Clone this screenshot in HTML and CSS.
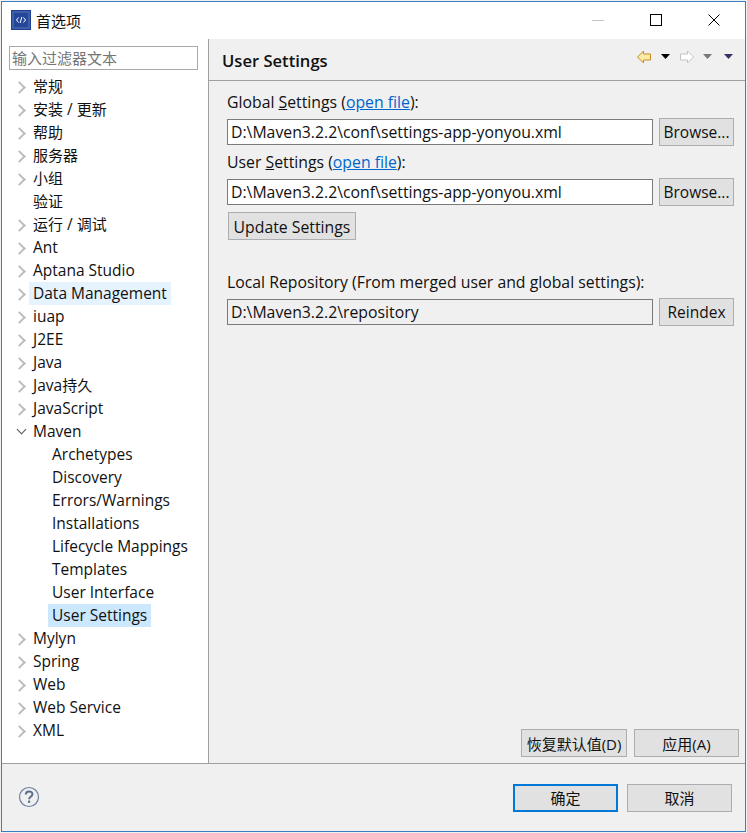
FILE: index.html
```html
<!DOCTYPE html>
<html lang="zh-CN">
  <head>
    <meta charset="UTF-8" />
    <title>首选项</title>
    <link rel="stylesheet" href="styles.css">
  </head>
  <body>
    <div class="window">
      <div class="titlebar">
        <svg class="app-icon" width="20" height="20" viewBox="0 0 20 20">
          <rect x="0.5" y="0.5" width="19" height="19" fill="#3f5fa8" stroke="#1f3f8f" />
          <rect x="3" y="3" width="14" height="14" fill="#24479c" />
          <path d="M7.5 7.5 5.5 10l2 2.5M12.5 7.5l2 2.5-2 2.5" fill="none" stroke="#fff" stroke-width="1" />
          <path d="M10.8 7 9.2 13" fill="none" stroke="#fff" stroke-width="1" />
        </svg>
        <span class="title">首选项</span>
        <div class="win-btns">
          <svg width="14" height="14" viewBox="0 0 14 14"><path d="M1 7.5h12" stroke="#c4c4c4" /></svg>
          <svg width="14" height="14" viewBox="0 0 14 14"><rect x="1.5" y="1.5" width="11" height="11" fill="none" stroke="#000" /></svg>
          <svg width="14" height="14" viewBox="0 0 14 14"><path d="M1.5 1.5l11 11M12.5 1.5l-11 11" stroke="#000" /></svg>
        </div>
      </div>

      <div class="main">
        <div class="sidebar">
          <input class="filter" type="text" placeholder="输入过滤器文本" />
          <ul class="tree">
            <li class="closed"><span class="cjk">常规</span></li>
            <li class="closed"><span class="cjk">安装</span> / <span class="cjk">更新</span></li>
            <li class="closed"><span class="cjk">帮助</span></li>
            <li class="closed"><span class="cjk">服务器</span></li>
            <li class="closed"><span class="cjk">小组</span></li>
            <li><span class="cjk">验证</span></li>
            <li class="closed"><span class="cjk">运行</span> / <span class="cjk">调试</span></li>
            <li class="closed">Ant</li>
            <li class="closed">Aptana Studio</li>
            <li class="closed"><span class="hover">Data Management</span></li>
            <li class="closed">iuap</li>
            <li class="closed">J2EE</li>
            <li class="closed">Java</li>
            <li class="closed">Java<span class="cjk">持久</span></li>
            <li class="closed">JavaScript</li>
            <li class="open">Maven</li>
            <li class="child">Archetypes</li>
            <li class="child">Discovery</li>
            <li class="child">Errors/Warnings</li>
            <li class="child">Installations</li>
            <li class="child">Lifecycle Mappings</li>
            <li class="child">Templates</li>
            <li class="child">User Interface</li>
            <li class="child"><span class="selected">User Settings</span></li>
            <li class="closed">Mylyn</li>
            <li class="closed">Spring</li>
            <li class="closed">Web</li>
            <li class="closed">Web Service</li>
            <li class="closed">XML</li>
          </ul>
        </div>

        <div class="content">
          <div class="page-head">
            <h1>User Settings</h1>
            <div class="nav-icons">
              <svg width="16" height="14" viewBox="0 0 16 14"><path d="M7.5 1 1.5 7l6 6v-3h7V4h-7z" fill="#fde9a8" stroke="#c98a1b" /></svg>
              <svg class="caret" width="9" height="5" viewBox="0 0 9 5"><path d="M0 0h9L4.5 5z" fill="#000" /></svg>
              <svg class="nav-next" width="16" height="14" viewBox="0 0 16 14"><path d="M8.5 1l6 6-6 6v-3h-7V4h7z" fill="#fff" stroke="#c4c4c4" /></svg>
              <svg class="caret" width="9" height="5" viewBox="0 0 9 5"><path d="M0 0h9L4.5 5z" fill="#777" /></svg>
              <svg class="caret" width="9" height="5" viewBox="0 0 9 5"><path d="M0 0h9L4.5 5z" fill="#3f2f66" /></svg>
            </div>
          </div>

          <div class="form">
            <div class="label">Global <u>S</u>ettings (<a href="#">open file</a>):</div>
            <div class="field-row">
              <input class="field" type="text" value="D:\Maven3.2.2\conf\settings-app-yonyou.xml" />
              <button class="btn browse">Browse...</button>
            </div>
            <div class="label">User <u>S</u>ettings (<a href="#">open file</a>):</div>
            <div class="field-row">
              <input class="field" type="text" value="D:\Maven3.2.2\conf\settings-app-yonyou.xml" />
              <button class="btn browse">Browse...</button>
            </div>
            <button class="btn update">Update Settings</button>
            <div class="label local">Local Repository (From merged user and global settings):</div>
            <div class="field-row">
              <input class="field readonly" type="text" value="D:\Maven3.2.2\repository" readonly />
              <button class="btn browse">Reindex</button>
            </div>
          </div>

          <div class="page-btns">
            <button class="btn wide restore cjk">恢复默认值(D)</button>
            <button class="btn wide cjk">应用(A)</button>
          </div>
        </div>
      </div>

      <div class="footer">
        <svg class="help" width="22" height="22" viewBox="0 0 22 22">
          <circle cx="11" cy="11" r="9.5" fill="none" stroke="#6d7fa3" stroke-width="1.2" />
          <path d="M7.8 8.6c0-4.2 6.6-4.2 6.6-.4 0 2.6-3.3 2.4-3.3 5" fill="none" stroke="#5b6b8c" stroke-width="2" />
          <rect x="10" y="14.6" width="2.2" height="2.2" fill="#5b6b8c" />
        </svg>
        <div class="footer-btns">
          <button class="btn wide default cjk">确定</button>
          <button class="btn wide cjk">取消</button>
        </div>
      </div>
    </div>
  </body>
</html>
```

FILE: styles.css
```css
* {
  margin: 0;
  padding: 0;
  box-sizing: border-box;
}

html, body {
  height: 100%;
  background: #f0f0f0;
  overflow: hidden;
}

body {
  font-family: "Open Sans", "Noto Sans CJK SC", sans-serif;
  font-size: 15.8px;
  color: #111;
}

.cjk {
  font-size: 15px;
}

.window {
  width: 745px;
  height: 831px;
  margin: 1px 0 0 1px;
  border: 1px solid #3c7fc0;
  display: flex;
  flex-direction: column;
  background: #f0f0f0;
}

.titlebar {
  height: 37px;
  flex: none;
  display: flex;
  align-items: center;
  background: #fff;
  padding: 0 0 1px 9px;
}

.title {
  margin-left: 5px;
  font-size: 15px;
}

.win-btns {
  margin-left: auto;
  display: flex;
  gap: 44px;
  padding-right: 24px;
}

.main {
  flex: 1;
  display: flex;
  min-height: 0;
}

.sidebar {
  width: 207px;
  flex: none;
  background: #fff;
  border-right: 1px solid #a0a0a0;
  padding: 7px 0 0 7px;
}

.filter {
  display: block;
  width: 189px;
  height: 24px;
  border: 1px solid #a9a9a9;
  padding-left: 2px;
  font-family: inherit;
  font-size: 15px;
  color: #111;
}

.filter::placeholder {
  color: #757575;
}

.tree {
  list-style: none;
  margin: 5px 0 0 -7px;
  font-size: 15.5px;
}

.tree li {
  height: 23px;
  line-height: 23px;
  padding-left: 31px;
  white-space: nowrap;
  position: relative;
}

.tree li.child {
  padding-left: 50px;
}

.tree li.closed::before {
  content: "";
  position: absolute;
  left: 13px;
  top: 8px;
  width: 7px;
  height: 7px;
  border-top: 2px solid #bdbdbd;
  border-right: 2px solid #bdbdbd;
  transform: rotate(45deg);
}

.tree li.open::before {
  content: "";
  position: absolute;
  left: 16px;
  top: 6px;
  width: 6px;
  height: 6px;
  border-bottom: 1px solid #555;
  border-right: 1px solid #555;
  transform: rotate(45deg);
}

.hover, .selected {
  display: inline-block;
  height: 23px;
  padding: 0 4px;
  margin-left: -4px;
}

.hover {
  background: #e5f3ff;
}

.selected {
  background: #cce8ff;
}

.content {
  flex: 1;
  display: flex;
  flex-direction: column;
  min-width: 0;
}

.page-head {
  height: 42px;
  flex: none;
  display: flex;
  align-items: center;
  justify-content: space-between;
  padding: 0 12px 0 13px;
  border-bottom: 1px solid #a0a0a0;
}

.page-head h1 {
  font-size: 16.6px;
  font-weight: 600;
  margin-top: 2px;
}

.nav-icons {
  display: flex;
  align-items: center;
  margin-bottom: 6px;
}

.caret {
  margin-left: 8px;
}

.nav-icons svg:nth-child(2) {
  margin-left: 9px;
}

.nav-next {
  margin-left: 9px;
}

.caret:last-child {
  margin-left: 12px;
}

.form {
  flex: 1;
  padding: 9px 10px 0 18px;
}

.label {
  height: 28px;
  line-height: 24px;
}

a {
  color: #0066cc;
}

.field-row {
  display: flex;
  align-items: center;
  gap: 6px;
  height: 28px;
  margin-bottom: 4px;
}

.field {
  width: 426px;
  height: 26px;
  border: 1px solid #7a7a7a;
  padding-left: 3px;
  font: inherit;
  color: #111;
  background: #fff;
}

.field.readonly {
  background: #f0f0f0;
}

.btn {
  height: 28px;
  border: 1px solid #adadad;
  background: #e1e1e1;
  font-family: inherit;
  font-size: 15.5px;
  color: #111;
}

.btn.cjk {
  font-size: 15px;
}

.browse {
  width: 75px;
}

.update {
  width: 128px;
  margin: 6px 0 0 1px;
  display: block;
  font-size: 15.8px;
  padding-top: 1px;
}

.local {
  margin-top: 30px;
}

.page-btns {
  display: flex;
  justify-content: flex-end;
  gap: 7px;
  padding: 0 6px 6px 0;
}

.wide {
  width: 105px;
}

.restore {
  width: 106px;
}

.footer {
  height: 68px;
  flex: none;
  border-top: 1px solid #a0a0a0;
  display: flex;
  align-items: center;
  justify-content: space-between;
  padding: 0 13px 0 16px;
}

.help {
  margin-bottom: 2px;
}

.footer-btns {
  display: flex;
  gap: 9px;
}

.default {
  border: 2px solid #0078d7;
}
```
